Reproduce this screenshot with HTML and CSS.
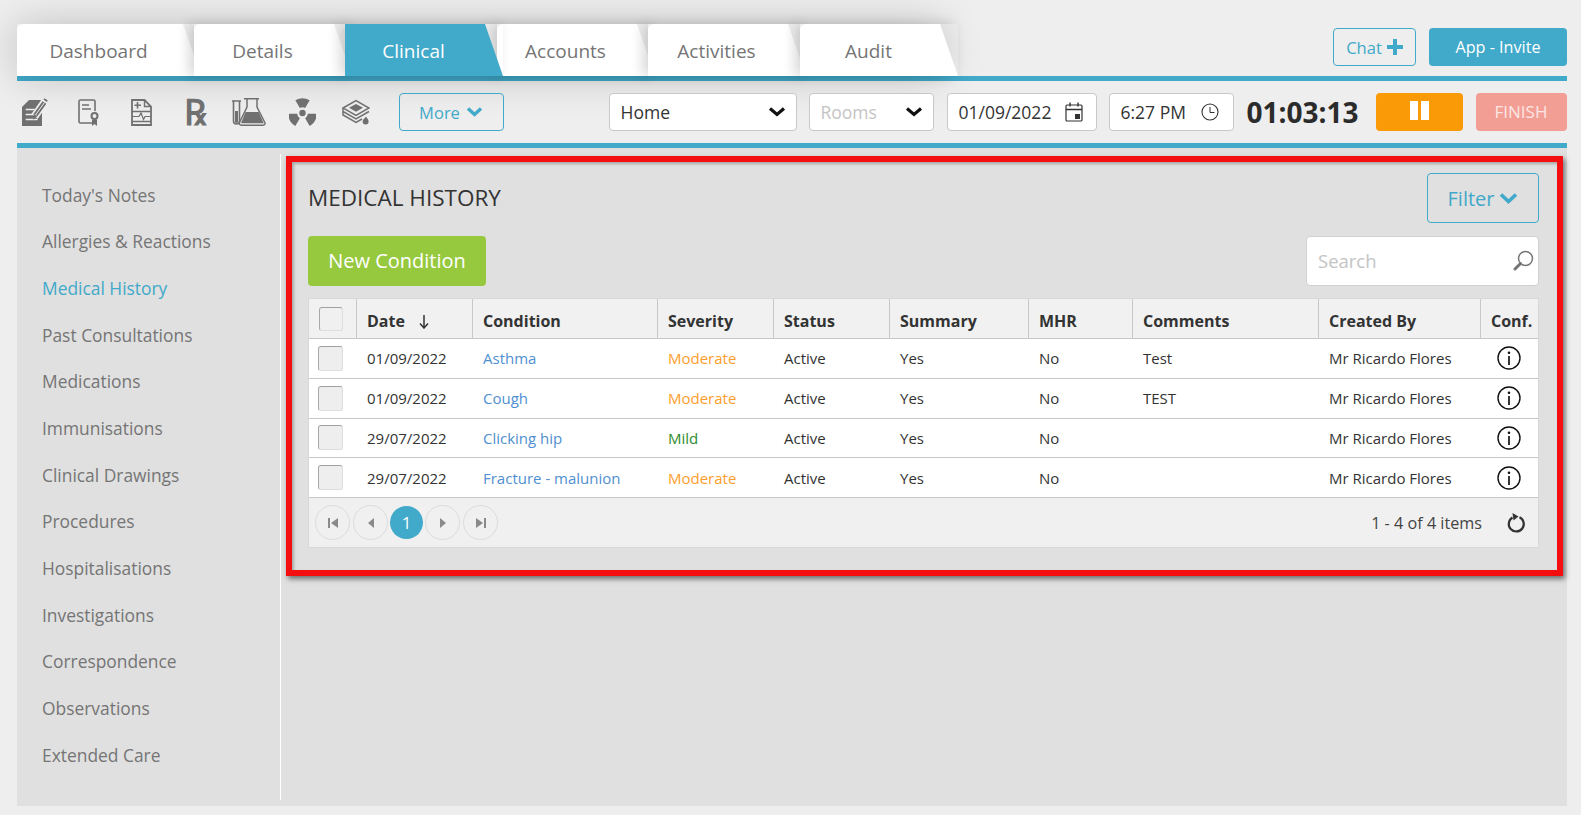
FILE: index.html
```html
<!DOCTYPE html>
<html lang="en">
<head>
    <meta charset="UTF-8">
    <meta name="viewport" content="width=device-width, initial-scale=1.0">
    <title>Medical History</title>
    <link rel="stylesheet" href="styles.css">
</head>
<body>
    <div class="topbar">
        <div class="tabs">
            <div class="tab tab-first">Dashboard</div>
            <div class="tab">Details</div>
            <div class="tab active">Clinical</div>
            <div class="tab tab-after">Accounts</div>
            <div class="tab">Activities</div>
            <div class="tab tab-after">Audit</div>
        </div>
        <div class="top-actions">
            <div class="btn-outline chat">Chat
                <svg width="16" height="16" viewBox="0 0 16 16"><path d="M6 0h4v6h6v4h-6v6H6v-6H0V6h6z" fill="#41a9c9"/></svg>
            </div>
            <div class="btn-invite">App - Invite</div>
        </div>
    </div>

    <div class="toolbar">
        <div class="tools">
            <!-- notes -->
            <div class="tool">
                <svg width="26" height="28" viewBox="0 0 26 28">
                    <path d="M7 2h13v26H0V9z" fill="#707070"/>
                    <path d="M3.700 11.500h9M3.700 16.500h7M3.700 21.500h12" stroke="#eee" stroke-width="1.500"/>
                    <path d="M23 3.500L12.500 18.500" stroke="#eee" stroke-width="8"/>
                    <path d="M14 24v4h6v-10z" fill="#707070"/>
                    <path d="M22.500 4.500L13.500 17" stroke="#707070" stroke-width="4.600"/>
                    <path d="M22.500 4.500L13.500 17" stroke="#eee" stroke-width="1"/>
                    <path d="M11.600 15.800l3.700 2.600-4.300 3.400zM21.500 1.500l1-1.300 3.300 2.400-1 1.400z" fill="#707070"/>
                </svg>
            </div>
            <!-- certificate -->
            <div class="tool">
                <svg width="21" height="28" viewBox="0 0 21 28">
                    <rect x="1" y="2" width="16" height="23" rx="1.500" fill="none" stroke="#707070" stroke-width="1.600"/>
                    <path d="M4 7h7M4 11h9" stroke="#707070" stroke-width="1.400"/>
                    <circle cx="16.500" cy="18" r="5" fill="#eee"/>
                    <circle cx="16.500" cy="18" r="3" fill="none" stroke="#707070" stroke-width="2"/>
                    <path d="M14 21.500h5V28l-2.500-2-2.500 2z" fill="#707070"/>
                </svg>
            </div>
            <!-- chart -->
            <div class="tool">
                <svg width="21" height="27" viewBox="0 0 21 27">
                    <path d="M1 1h12.500L20 7.500V26H1z" fill="none" stroke="#707070" stroke-width="1.800"/>
                    <path d="M13.500 1v6.500H20" fill="none" stroke="#707070" stroke-width="1.400"/>
                    <path d="M6.500 3v6.500M3.500 6.300h6.500" stroke="#707070" stroke-width="1.600"/>
                    <path d="M1 12.500h19M1 22.500h19" stroke="#707070" stroke-width="1.300"/>
                    <path d="M1 17.500h7l2-3.500 2.500 6.500 1.500-3h6" fill="none" stroke="#707070" stroke-width="1.200"/>
                </svg>
            </div>
            <!-- prescription -->
            <div class="tool"><span class="rx">℞</span></div>
            <!-- flasks -->
            <div class="tool">
                <svg width="34" height="28" viewBox="0 0 34 28">
                    <path d="M0 3h9M1.500 3v20a3 3 0 0 0 6 0V3" fill="none" stroke="#707070" stroke-width="1.600"/>
                    <path d="M3 13h3v10.500a1.500 1.500 0 0 1-3 0z" fill="#707070"/>
                    <path d="M12 .8h15M15 1v8L7.500 24.500c-.7 1.500.2 2.700 1.800 2.700H31c1.600 0 2.500-1.200 1.800-2.700L25 9V1" fill="none" stroke="#707070" stroke-width="1.500"/>
                    <path d="M13.500 14h13.200l5 11.300H9z" fill="#707070"/>
                </svg>
            </div>
            <!-- radiology -->
            <div class="tool">
                <svg width="27" height="28" viewBox="0 0 27 28">
                    <g fill="none" stroke="#707070" stroke-width="9">
                        <path d="M8.600 6.200A9.750 9.750 0 0 1 18.400 6.200"/>
                        <path d="M3.750 15.700A9.750 9.750 0 0 0 8.600 24.100"/>
                        <path d="M18.400 24.100A9.750 9.750 0 0 0 23.250 15.700"/>
                    </g>
                    <circle cx="13.500" cy="15" r="3.200" fill="#707070"/>
                </svg>
            </div>
            <!-- books -->
            <div class="tool">
                <svg width="28" height="28" viewBox="0 0 28 28">
                    <path d="M1 10L14 2.500 27 10 14 17.500z" fill="none" stroke="#707070" stroke-width="1.500"/>
                    <path d="M7 9.800l7-3.800 7 3.800-7 4z" fill="#707070"/>
                    <path d="M1 10v3.500l13 7.500 13-7.500M1 13.500V17l13 7.500 6-3.500" fill="none" stroke="#707070" stroke-width="1.500"/>
                    <path d="M24 18.500c1.400 2 2.600 3.300 2.600 5a3 3 0 0 1-6 0c0-1.700 2-3 3.400-5z" fill="#707070"/>
                </svg>
            </div>
        </div>
        <div class="btn-outline more">More
            <svg width="17" height="12" viewBox="0 0 17 12"><path d="M2 2.500l6.500 6 6.500-6" fill="none" stroke="#41a9c9" stroke-width="3.400"/></svg>
        </div>

        <div class="field field-home">Home
            <svg width="18" height="12" viewBox="0 0 18 12"><path d="M2 2.500l7 6 7-6" fill="none" stroke="#111" stroke-width="3.200"/></svg>
        </div>
        <div class="field field-rooms"><span class="placeholder">Rooms</span>
            <svg width="18" height="12" viewBox="0 0 18 12"><path d="M2 2.500l7 6 7-6" fill="none" stroke="#111" stroke-width="3.200"/></svg>
        </div>
        <div class="field field-date">01/09/2022
            <svg width="18" height="20" viewBox="0 0 18 20">
                <rect x="1" y="3" width="16" height="16" rx="1" fill="none" stroke="#333" stroke-width="1.200"/>
                <path d="M1 7.500h16M5 .5v4M13 .5v4" stroke="#333" stroke-width="1.400"/>
                <rect x="10" y="12" width="5" height="5" fill="#333"/>
            </svg>
        </div>
        <div class="field field-time">6:27 PM
            <svg width="18" height="18" viewBox="0 0 18 18">
                <circle cx="9" cy="9" r="8" fill="none" stroke="#333" stroke-width="1.100"/>
                <path d="M9 4v5.500h4.500" fill="none" stroke="#333" stroke-width="1"/>
            </svg>
        </div>
        <div class="timer">01:03:13</div>
        <div class="btn-pause"><span></span><span></span></div>
        <div class="btn-finish">FINISH</div>
    </div>

    <div class="content">
        <div class="sidebar">
            <div class="side-item">Today's Notes</div>
            <div class="side-item">Allergies &amp; Reactions</div>
            <div class="side-item current">Medical History</div>
            <div class="side-item">Past Consultations</div>
            <div class="side-item">Medications</div>
            <div class="side-item">Immunisations</div>
            <div class="side-item">Clinical Drawings</div>
            <div class="side-item">Procedures</div>
            <div class="side-item">Hospitalisations</div>
            <div class="side-item">Investigations</div>
            <div class="side-item">Correspondence</div>
            <div class="side-item">Observations</div>
            <div class="side-item">Extended Care</div>
        </div>

        <div class="panel">
            <div class="panel-head">
                <h2>MEDICAL HISTORY</h2>
                <div class="btn-outline filter">Filter
                    <svg width="19" height="13" viewBox="0 0 19 13"><path d="M2 2.500l7.500 7 7.500-7" fill="none" stroke="#41a9c9" stroke-width="3.600"/></svg>
                </div>
            </div>
            <div class="panel-actions">
                <div class="btn-new">New Condition</div>
                <div class="search">
                    <span class="placeholder">Search</span>
                    <svg width="21" height="21" viewBox="0 0 21 21">
                        <circle cx="12.500" cy="8.500" r="7" fill="none" stroke="#757575" stroke-width="1.500"/>
                        <path d="M7.500 13.500L2 19" stroke="#757575" stroke-width="3" stroke-linecap="round"/>
                    </svg>
                </div>
            </div>

            <div class="grid">
                <table>
                    <thead>
                        <tr>
                            <th class="col-check"><span class="check check-head"></span></th>
                            <th class="col-date">Date
                                <svg class="sort" width="10" height="14" viewBox="0 0 10 14"><path d="M5 0v12M1 8.500L5 13l4-4.500" fill="none" stroke="#333" stroke-width="1.500"/></svg>
                            </th>
                            <th class="col-condition">Condition</th>
                            <th class="col-severity">Severity</th>
                            <th class="col-status">Status</th>
                            <th class="col-summary">Summary</th>
                            <th class="col-mhr">MHR</th>
                            <th class="col-comments">Comments</th>
                            <th class="col-created">Created By</th>
                            <th class="col-conf">Conf.</th>
                        </tr>
                    </thead>
                    <tbody>
                        <tr>
                            <td class="cell-check"><span class="check"></span></td>
                            <td>01/09/2022</td>
                            <td class="link">Asthma</td>
                            <td class="moderate">Moderate</td>
                            <td>Active</td>
                            <td>Yes</td>
                            <td>No</td>
                            <td>Test</td>
                            <td>Mr Ricardo Flores</td>
                            <td class="cell-info"><svg width="24" height="24" viewBox="0 0 24 24"><circle cx="12" cy="12" r="11" fill="none" stroke="#111" stroke-width="1.400"/><circle cx="12" cy="6.800" r="1.300" fill="#111"/><path d="M12 10v9" stroke="#111" stroke-width="1.700"/></svg></td>
                        </tr>
                        <tr>
                            <td class="cell-check"><span class="check"></span></td>
                            <td>01/09/2022</td>
                            <td class="link">Cough</td>
                            <td class="moderate">Moderate</td>
                            <td>Active</td>
                            <td>Yes</td>
                            <td>No</td>
                            <td>TEST</td>
                            <td>Mr Ricardo Flores</td>
                            <td class="cell-info"><svg width="24" height="24" viewBox="0 0 24 24"><circle cx="12" cy="12" r="11" fill="none" stroke="#111" stroke-width="1.400"/><circle cx="12" cy="6.800" r="1.300" fill="#111"/><path d="M12 10v9" stroke="#111" stroke-width="1.700"/></svg></td>
                        </tr>
                        <tr>
                            <td class="cell-check"><span class="check"></span></td>
                            <td>29/07/2022</td>
                            <td class="link">Clicking hip</td>
                            <td class="mild">Mild</td>
                            <td>Active</td>
                            <td>Yes</td>
                            <td>No</td>
                            <td></td>
                            <td>Mr Ricardo Flores</td>
                            <td class="cell-info"><svg width="24" height="24" viewBox="0 0 24 24"><circle cx="12" cy="12" r="11" fill="none" stroke="#111" stroke-width="1.400"/><circle cx="12" cy="6.800" r="1.300" fill="#111"/><path d="M12 10v9" stroke="#111" stroke-width="1.700"/></svg></td>
                        </tr>
                        <tr>
                            <td class="cell-check"><span class="check"></span></td>
                            <td>29/07/2022</td>
                            <td class="link">Fracture - malunion</td>
                            <td class="moderate">Moderate</td>
                            <td>Active</td>
                            <td>Yes</td>
                            <td>No</td>
                            <td></td>
                            <td>Mr Ricardo Flores</td>
                            <td class="cell-info"><svg width="24" height="24" viewBox="0 0 24 24"><circle cx="12" cy="12" r="11" fill="none" stroke="#111" stroke-width="1.400"/><circle cx="12" cy="6.800" r="1.300" fill="#111"/><path d="M12 10v9" stroke="#111" stroke-width="1.700"/></svg></td>
                        </tr>
                    </tbody>
                </table>
                <div class="pager">
                    <div class="pages">
                        <span class="page"><svg width="12" height="12" viewBox="0 0 12 12"><path d="M1 1h2v10H1zM11 1v10L4 6z" fill="#8a8a8a"/></svg></span>
                        <span class="page"><svg width="8" height="12" viewBox="0 0 8 12"><path d="M7 1v10L1 6z" fill="#8a8a8a"/></svg></span>
                        <span class="page page-current">1</span>
                        <span class="page"><svg width="8" height="12" viewBox="0 0 8 12"><path d="M1 1v10l6-5z" fill="#8a8a8a"/></svg></span>
                        <span class="page"><svg width="12" height="12" viewBox="0 0 12 12"><path d="M1 1v10l7-5zM9 1h2v10H9z" fill="#8a8a8a"/></svg></span>
                    </div>
                    <div class="pager-info">1 - 4 of 4 items</div>
                    <svg class="refresh" width="19" height="20" viewBox="0 0 19 20">
                        <path d="M12.500 4.200A7.500 7.500 0 1 1 5.500 4.500" fill="none" stroke="#333" stroke-width="2.200"/>
                        <path d="M5.500 0l6 3.500-5 4z" fill="#333"/>
                    </svg>
                </div>
            </div>
        </div>
    </div>
</body>
</html>
```

FILE: styles.css
```css
body {
    margin: 0;
    padding: 24px 14px 9px 17px;
    background-color: #eeeeee;
    font-family: "Open Sans", "Liberation Sans", sans-serif;
    color: #333;
}

h2 {
    margin: -2px 0 0;
    font-size: 22.500px;
    font-weight: 400;
    color: #333;
}

svg {
    display: block;
    flex: none;
}

/* top bar */
.topbar {
    display: flex;
    justify-content: space-between;
    height: 52px;
    border-bottom: 5px solid #41a9c9;
}

.tabs {
    display: flex;
    height: 52px;
    box-shadow: 0 0 40px rgba(0, 0, 0, 0.2);
    width: 924px;
}

.tab {
    position: relative;
    isolation: isolate;
    flex: none;
    width: 158px;
    margin-left: -7px;
    padding: 1px 21px 0 0;
    box-sizing: border-box;
    line-height: 52px;
    text-align: center;
    font-size: 19px;
    color: #757575;
    box-shadow: -5px 0 12px rgba(0, 0, 0, 0.16);
}

.tab::before {
    content: "";
    position: absolute;
    inset: 0;
    z-index: -1;
    background-color: #fff;
    border-radius: 6px 0 0 0;
    clip-path: polygon(0 0, calc(100% - 18px) 0, 100% 100%, 0 100%);
}

.tab-first {
    width: 184px;
    margin-left: 0;
    box-shadow: none;
}

.tab-after {
    margin-left: -6px;
}

.tab.active {
    z-index: 1;
    color: #fff;
}

.tab.active::before {
    background-color: #41a9c9;
    border-radius: 0;
}

.top-actions {
    display: flex;
    gap: 13px;
    margin-top: 4px;
    height: 38px;
}

.btn-outline {
    display: flex;
    align-items: center;
    justify-content: center;
    box-sizing: border-box;
    border: 1px solid #41a9c9;
    border-radius: 4px;
    color: #41a9c9;
}

.chat {
    width: 83px;
    gap: 5px;
    font-size: 16.500px;
}

.btn-invite {
    width: 138px;
    background-color: #41a9c9;
    border-radius: 4px;
    color: #fff;
    font-size: 16.200px;
    line-height: 38px;
    text-align: center;
}

/* toolbar */
.toolbar {
    position: relative;
    display: flex;
    align-items: center;
    height: 62px;
    border-bottom: 5px solid #41a9c9;
}

.tools {
    display: flex;
    margin-left: -9px;
}

.tool {
    display: flex;
    align-items: center;
    justify-content: center;
    width: 53.500px;
    height: 30px;
}

.rx {
    font-family: "DejaVu Serif", serif;
    font-weight: bold;
    font-size: 36px;
    line-height: 30px;
    color: #707070;
}

.more {
    width: 105px;
    height: 38px;
    margin-left: 16px;
    gap: 6px;
    font-size: 16.500px;
}

.field {
    display: flex;
    align-items: center;
    justify-content: space-between;
    box-sizing: border-box;
    height: 38px;
    margin-left: 12px;
    padding: 0 13px 0 11px;
    background-color: #fff;
    border: 1px solid #c8c8c8;
    border-radius: 4px;
    font-size: 17.500px;
    color: #333;
}

.field-home {
    width: 188px;
    margin-left: 105px;
    padding-right: 10px;
}

.field-rooms {
    width: 125px;
    padding-right: 10px;
}

.field-date {
    width: 150px;
    margin-left: 13px;
}

.field-time {
    width: 125px;
    padding-right: 14px;
}

.placeholder {
    color: #c4c4c4;
}

.timer {
    width: 111px;
    margin-left: 13px;
    font-size: 28px;
    font-weight: 700;
    color: #2b2b2b;
    white-space: nowrap;
}

.btn-pause {
    display: flex;
    justify-content: center;
    gap: 3px;
    width: 87px;
    height: 38px;
    margin-left: 18px;
    padding-top: 8px;
    box-sizing: border-box;
    background-color: #fb9a07;
    border-radius: 4px;
}

.btn-pause span {
    width: 8px;
    height: 19px;
    background-color: #fff;
}

.btn-finish {
    width: 91px;
    margin-left: 13px;
    background-color: #f29e95;
    border-radius: 4px;
    color: #fbe6e3;
    font-size: 17px;
    line-height: 38px;
    text-align: center;
}

/* main content */
.content {
    display: flex;
    align-items: flex-start;
    height: 658px;
    background-color: #e0e0e0;
}

.sidebar {
    box-sizing: border-box;
    width: 264px;
    height: 646px;
    margin-top: 6px;
    padding: 17.600px 0 0 25px;
    border-right: 1px solid #fff;
}

.side-item {
    height: 46.700px;
    line-height: 46.700px;
    font-size: 17.400px;
    color: #757575;
}

.side-item.current {
    color: #41a9c9;
}

.panel {
    box-sizing: border-box;
    width: 1277px;
    height: 420px;
    margin: 8px 0 0 5px;
    padding: 11px 18px 0 16px;
    border: 6px solid #f30f0f;
    box-shadow: 2px 3px 5px rgba(0, 0, 0, 0.5), inset 2px 2px 3px rgba(0, 0, 0, 0.25);
}

.panel-head,
.panel-actions {
    display: flex;
    justify-content: space-between;
    align-items: center;
}

.panel-head {
    height: 50px;
}

.panel-actions {
    height: 50px;
    margin-top: 13px;
}

.filter {
    width: 112px;
    height: 50px;
    gap: 5px;
    font-size: 20px;
}

.btn-new {
    width: 178px;
    background-color: #97c93f;
    border-radius: 4px;
    color: #fff;
    font-size: 20px;
    line-height: 50px;
    text-align: center;
}

.search {
    display: flex;
    align-items: center;
    justify-content: space-between;
    box-sizing: border-box;
    width: 233px;
    height: 50px;
    padding: 0 4px 2px 11px;
    background-color: #fff;
    border: 1px solid #d0d0d0;
    border-radius: 4px;
    font-size: 18.500px;
}

/* grid */
.grid {
    margin-top: 12px;
    border: 1px solid #d8d8d8;
    background-color: #f0f0f0;
}

table {
    width: 100%;
    table-layout: fixed;
    border-collapse: separate;
    border-spacing: 0;
}

th,
td {
    box-sizing: border-box;
}

th {
    height: 40px;
    padding: 4px 10px 0;
    background-color: #f1f1f1;
    border-right: 1px solid #c8c8c8;
    border-bottom: 1px solid #c8c8c8;
    font-size: 16px;
    font-weight: 700;
    text-align: left;
    color: #333;
    white-space: nowrap;
}

td {
    height: 39.750px;
    padding: 0 10px;
    background-color: #fff;
    border-bottom: 1px solid #c8c8c8;
    font-size: 15px;
    color: #333;
    white-space: nowrap;
}

.col-check { width: 48px; padding: 0; }
.col-date { width: 116px; }
.col-condition { width: 185px; }
.col-severity { width: 116px; }
.col-status { width: 116px; }
.col-summary { width: 139px; }
.col-mhr { width: 104px; }
.col-comments { width: 186px; }
.col-created { width: 162px; }
.col-conf { border-right: 0; padding: 5px 0 0 10px; }

.sort {
    display: inline-block;
    margin-left: 10px;
    vertical-align: -2px;
}

.cell-check {
    padding: 0 0 0 9px;
}

.cell-info {
    padding: 0 0 0 16px;
}

.check {
    display: block;
    box-sizing: border-box;
    width: 25px;
    height: 25px;
    background-color: #eeeeee;
    border: 1px solid #dedede;
    border-top-color: #a0a0a0;
    border-left-color: #a8a8a8;
    border-radius: 3px;
}

.check-head {
    width: 24px;
    height: 24px;
    margin-left: 10px;
    background-color: #f0f0f0;
}

.link {
    color: #4f8fd0;
}

.moderate {
    color: #fd9e2c;
}

.mild {
    color: #2e8b2e;
}

.pager {
    display: flex;
    align-items: center;
    height: 49px;
    padding: 0 12px 0 6px;
}

.pages {
    display: flex;
    align-items: center;
    gap: 3px;
}

.page {
    display: flex;
    align-items: center;
    justify-content: center;
    box-sizing: border-box;
    width: 35px;
    height: 35px;
    border: 1px solid #dcdcdc;
    border-radius: 50%;
}

.page-current {
    width: 33px;
    height: 33px;
    margin: 0 -1px;
    background-color: #41a9c9;
    border: 0;
    color: #fff;
    font-size: 17px;
}

.pager-info {
    margin-left: auto;
    font-size: 16.200px;
    color: #444;
}

.refresh {
    margin-left: 25px;
}
```
